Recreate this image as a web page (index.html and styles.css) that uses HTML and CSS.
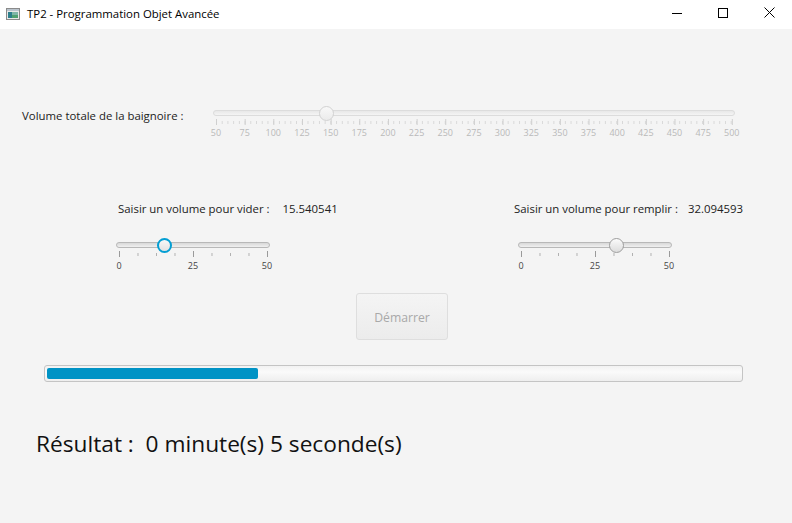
FILE: index.html
```html
<!DOCTYPE html>
<html lang="fr">
<head>
<meta charset="utf-8">
<title>TP2 - Programmation Objet Avancée</title>
<link rel="stylesheet" href="styles.css">
</head>
<body>
<div class="window">
  <header class="titlebar">
    <div class="title-left">
      <svg class="app-icon" width="14" height="12" viewBox="0 0 14 12">
        <rect x="0.5" y="0.5" width="13" height="11" fill="#e8e8e8" stroke="#8a8a8a"/>
        <rect x="1" y="1" width="12" height="2" fill="#b9c3cc"/>
        <rect x="2" y="4" width="4" height="6" fill="#2c7f8c"/>
        <rect x="6" y="4" width="6" height="6" fill="#7fb6a8"/>
        <rect x="6" y="7" width="6" height="3" fill="#4fa070"/>
      </svg>
      <span class="title-text">TP2 - Programmation Objet Avancée</span>
    </div>
    <div class="win-buttons">
      <div class="win-btn">
        <svg width="10" height="10" viewBox="0 0 10 10"><path d="M0 5.5H10" stroke="#000" stroke-width="1"/></svg>
      </div>
      <div class="win-btn">
        <svg width="10" height="10" viewBox="0 0 10 10"><rect x="0.5" y="0.5" width="9" height="9" fill="none" stroke="#000" stroke-width="1"/></svg>
      </div>
      <div class="win-btn">
        <svg width="11" height="11" viewBox="0 0 11 11"><path d="M0.5 0.5L10.5 10.5M10.5 0.5L0.5 10.5" stroke="#000" stroke-width="1"/></svg>
      </div>
    </div>
  </header>

  <main class="content">
    <section class="row-total">
      <label class="lbl total-lbl">Volume totale de la baignoire :</label>
      <div class="slider big disabled">
        <div class="track"></div>
        <div class="thumb" style="left: 106px"></div>
        <div class="ticks"></div>
        <div class="tick-labels">
          <span>50</span><span>75</span><span>100</span><span>125</span><span>150</span><span>175</span><span>200</span><span>225</span><span>250</span><span>275</span><span>300</span><span>325</span><span>350</span><span>375</span><span>400</span><span>425</span><span>450</span><span>475</span><span>500</span>
        </div>
      </div>
    </section>

    <section class="row-pair">
      <div class="group left">
        <div class="group-head">
          <span class="lbl">Saisir un volume pour vider :</span>
          <span class="lbl value">15.540541</span>
        </div>
        <div class="slider small">
          <div class="track"></div>
          <div class="thumb focused" style="left: 41px"></div>
          <div class="ticks"></div>
          <div class="tick-labels"><span>0</span><span>25</span><span>50</span></div>
        </div>
      </div>
      <div class="group right">
        <div class="group-head">
          <span class="lbl">Saisir un volume pour remplir :</span>
          <span class="lbl value">32.094593</span>
        </div>
        <div class="slider small">
          <div class="track"></div>
          <div class="thumb" style="left: 91px"></div>
          <div class="ticks"></div>
          <div class="tick-labels"><span>0</span><span>25</span><span>50</span></div>
        </div>
      </div>
    </section>

    <div class="row-button">
      <button class="btn" disabled>Démarrer</button>
    </div>

    <div class="progress">
      <div class="bar" style="width: 211px"></div>
    </div>

    <p class="result">Résultat :&nbsp; 0 minute(s) 5 seconde(s)</p>
  </main>
</div>
</body>
</html>
```
FILE: styles.css
```css
* { box-sizing: border-box; }
html, body {
  margin: 0;
  padding: 0;
}
body {
  width: 792px;
  height: 523px;
  overflow: hidden;
  background: #f4f4f4;
  font-family: "Open Sans", "Noto Sans", sans-serif;
  color: #222;
}
.window {
  width: 792px;
  height: 523px;
  display: flex;
  flex-direction: column;
}
.titlebar {
  height: 29px;
  background: #fff;
  display: flex;
  justify-content: space-between;
  align-items: stretch;
  flex-shrink: 0;
}
.title-left {
  display: flex;
  align-items: center;
  padding-left: 6px;
  gap: 7px;
}
.app-icon { display: block; margin-top: -2px; }
.title-text {
  font-size: 11.4px;
  color: #000;
  margin-top: -3px;
}
.win-buttons { display: flex; }
.win-btn {
  width: 46px;
  display: flex;
  align-items: center;
  justify-content: center;
  padding-bottom: 4px;
}
.win-btn svg { display: block; }

.content {
  flex: 1;
  display: flex;
  flex-direction: column;
}

.lbl {
  font-size: 11.4px;
  color: #222;
  white-space: nowrap;
}

/* Row 1 */
.row-total {
  display: flex;
  align-items: flex-start;
  padding-left: 22px;
  margin-top: 77px;
}
.total-lbl {
  width: 191px;
  flex: none;
  line-height: 16px;
  margin-top: 2px;
}

/* Slider */
.slider {
  position: relative;
  flex: none;
}
.slider .track {
  height: 6px;
  border-radius: 3px;
  border: 1px solid #b8b8b8;
  background: linear-gradient(#d8d8d8, #f0f0f0);
}
.slider .thumb {
  position: absolute;
  top: -4px;
  width: 15px;
  height: 15px;
  border-radius: 50%;
  border: 1px solid #9e9e9e;
  background: linear-gradient(#fbfbfb, #dcdcdc);
}
.slider .thumb.focused {
  border: 2px solid #039ed3;
  background: linear-gradient(#f8f8f8, #e2e2e2);
}
.slider .ticks {
  margin: 3px 3px 0;
  height: 6px;
  background-repeat: repeat-x;
}
.slider .tick-labels {
  display: flex;
  font-size: 9px;
  line-height: 12px;
  margin-top: 2px;
}
.slider .tick-labels span {
  flex: none;
  text-align: center;
}

.slider.big { width: 522px; margin-top: 4px; }
.slider.big .ticks {
  width: 517px;
  background-image:
    linear-gradient(to right, #cfcfcf 1px, transparent 1px),
    linear-gradient(to right, #d8d8d8 1px, transparent 1px);
  background-size: 28.667px 6px, 5.7333px 3px;
  background-position: 0 0, 0 2px;
}
.slider.big .tick-labels {
  margin-left: -11.333px;
  color: #b9b9b9;
}
.slider.big .tick-labels span { width: 28.667px; }
.slider.disabled .track {
  border-color: #dcdcdc;
  background: linear-gradient(#e8e8e8, #f4f4f4);
}
.slider.disabled .thumb {
  border-color: #d2d2d2;
  background: linear-gradient(#f8f8f8, #ebebeb);
}

.slider.small { width: 154px; }
.slider.small .ticks {
  width: 149px;
  background-image:
    linear-gradient(to right, #9a9a9a 1px, transparent 1px),
    linear-gradient(to right, #b0b0b0 1px, transparent 1px);
  background-size: 74px 6px, 18.5px 3px;
  background-position: 0 0, 0 2px;
}
.slider.small .tick-labels {
  margin-left: -34px;
  margin-top: 3px;
  color: #444;
}
.slider.small .tick-labels span { width: 74px; }

/* Row 2 */
.row-pair {
  display: grid;
  grid-template-columns: 398px auto;
  padding-left: 116px;
  margin-top: 62px;
}
.group { display: flex; flex-direction: column; }
.group-head {
  display: flex;
  line-height: 16px;
}
.group.left .group-head { padding-left: 2px; }
.group.left .value { margin-left: 13px; }
.group.right .value { margin-left: 10px; }
.group .slider { margin-top: 25px; }
.group.right .slider { margin-left: 4px; }

/* Button */
.row-button {
  display: flex;
  padding-left: 356px;
  margin-top: 21px;
}
.btn {
  width: 92px;
  height: 47px;
  border: 1px solid #dedede;
  border-radius: 3px;
  background: linear-gradient(#f4f4f4, #ececec);
  font-family: inherit;
  font-size: 12.2px;
  color: #a9a9a9;
  padding: 2px 0 0;
}

/* Progress */
.progress {
  margin: 25px 0 0 44px;
  width: 699px;
  height: 17px;
  border: 1px solid #c4c4c4;
  border-radius: 3px;
  background: linear-gradient(#f2f2f2, #fafafa 40%, #eeeeee);
  padding: 2px;
}
.progress .bar {
  height: 11px;
  background: #0093c5;
  border-radius: 2px;
}

.result {
  margin: 48px 0 0 36px;
  font-size: 22.7px;
  line-height: 28px;
  color: #111;
}
```
